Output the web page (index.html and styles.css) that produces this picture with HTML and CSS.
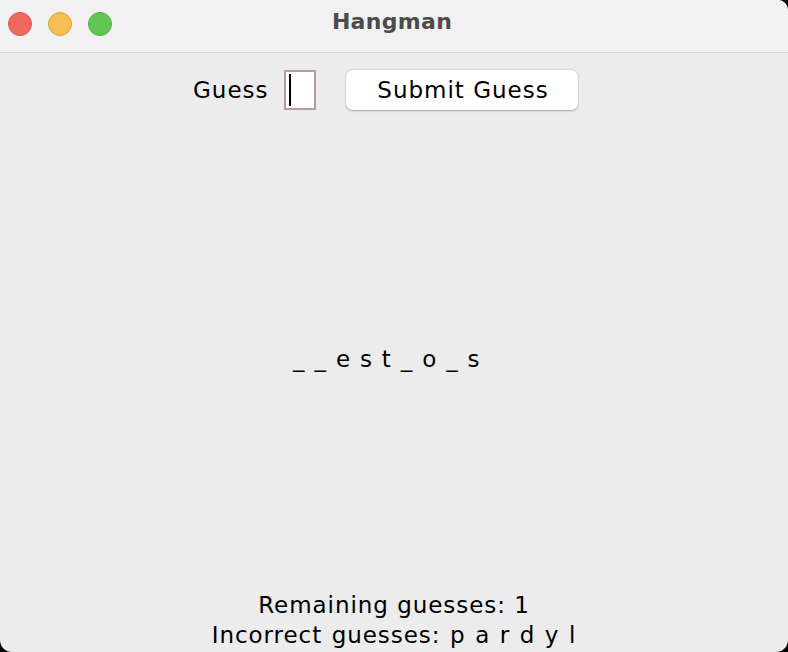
FILE: index.html
```html
<!DOCTYPE html>
<html>
<head>
<meta charset="utf-8">
<title>Hangman</title>
<link rel="stylesheet" href="styles.css">
</head>
<body>
<div class="window">
  <div class="titlebar">
    <div class="lights">
      <span class="light red"></span>
      <span class="light yellow"></span>
      <span class="light green"></span>
    </div>
    <div class="title">Hangman</div>
  </div>
  <div class="content">
    <div class="toprow">
      <span class="label">Guess</span>
      <span class="input"><span class="caret"></span></span>
      <span class="button">Submit Guess</span>
    </div>
    <div class="middle">
      <span class="word">_ _ e s t _ o _ s</span>
    </div>
    <div class="bottom">
      <div class="line">Remaining guesses: 1</div>
      <div class="line wide">Incorrect guesses: p a r d y l</div>
    </div>
  </div>
</div>
</body>
</html>
```
FILE: styles.css
```css
html, body {
  margin: 0;
  padding: 0;
  background: #000;
  width: 788px;
  height: 652px;
  overflow: hidden;
}
.window {
  width: 788px;
  height: 652px;
  display: flex;
  flex-direction: column;
  background: #ececec;
  border-radius: 0 10px 12px 12px;
  overflow: hidden;
  font-family: "DejaVu Sans", sans-serif;
  color: #000;
}
.titlebar {
  height: 52px;
  flex: none;
  background: #f1f1f1;
  border-bottom: 1px solid #d2d2d2;
  display: flex;
  align-items: center;
  justify-content: center;
  position: relative;
}
.lights {
  position: absolute;
  left: 8px;
  top: 12px;
  display: flex;
  gap: 16px;
}
.light {
  width: 24px;
  height: 24px;
  border-radius: 50%;
  box-sizing: border-box;
}
.red { background: #ee6a5f; border: 1px solid #d8574c; }
.yellow { background: #f6be50; border: 1px solid #dea43a; }
.green { background: #61c555; border: 1px solid #4ead43; }
.title {
  font-weight: bold;
  font-size: 22px;
  letter-spacing: 0.3px;
  color: #4b4b4b;
  margin-top: -9px;
  margin-right: 4px;
}
.content {
  flex: 1;
  display: flex;
  flex-direction: column;
}
.toprow {
  display: flex;
  align-items: center;
  justify-content: flex-start;
  padding-top: 17px;
  padding-left: 193px;
  height: 40px;
}
.label {
  font-size: 23px;
  letter-spacing: 1px;
  width: 75px;
  margin-right: 16px;
}
.input {
  width: 32px;
  height: 40px;
  box-sizing: border-box;
  border: 2px solid #b49c9c;
  background: #fff;
  display: flex;
  align-items: center;
  padding-left: 3px;
  margin-right: 30px;
}
.caret {
  width: 2px;
  height: 32px;
  background: #000;
}
.button {
  width: 232px;
  height: 40px;
  box-sizing: border-box;
  background: #fff;
  border-radius: 7px;
  box-shadow: 0 0.5px 2px rgba(0,0,0,0.3);
  display: flex;
  align-items: center;
  justify-content: center;
  font-size: 23px;
  letter-spacing: 1px;
  padding-left: 2px;
}
.middle {
  flex: 1;
  display: flex;
  align-items: center;
  justify-content: center;
  padding-right: 14px;
  padding-top: 18px;
}
.word {
  font-size: 23px;
  letter-spacing: 1.3px;
}
.bottom {
  display: flex;
  flex-direction: column;
  align-items: center;
  padding-bottom: 2px;
}
.line {
  font-size: 23px;
  letter-spacing: 0.95px;
  line-height: 30px;
}
.wide {
  word-spacing: 1.3px;
}
```
